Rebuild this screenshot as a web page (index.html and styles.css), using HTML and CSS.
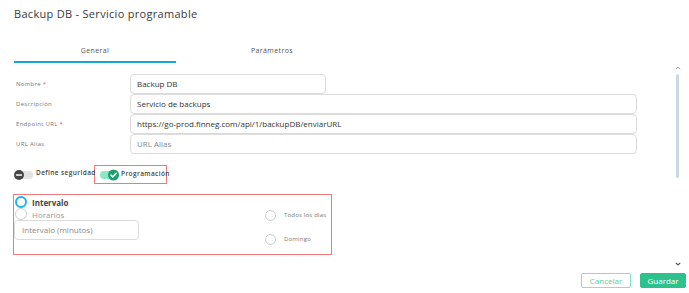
FILE: index.html
```html
<!DOCTYPE html>
<html lang="es">
<head>
<meta charset="utf-8">
<title>Backup DB - Servicio programable</title>
<link rel="stylesheet" href="styles.css">
</head>
<body>
<div class="modal">
  <h1 class="title">Backup DB - Servicio programable</h1>
  <div class="tabs">
    <div class="tab active">General</div>
    <div class="tab">Parámetros</div>
  </div>
  <div class="main">
    <div class="form">
      <div class="fields">
        <label class="lbl">Nombre <span class="req">*</span></label>
        <div class="inp short">Backup DB</div>
        <label class="lbl">Descripción</label>
        <div class="inp">Servicio de backups</div>
        <label class="lbl">Endpoint URL <span class="req">*</span></label>
        <div class="inp">https://go-prod.finneg.com/api/1/backupDB/enviarURL</div>
        <label class="lbl">URL Alias</label>
        <div class="inp ph">URL Alias</div>
      </div>
      <div class="toggles">
        <div class="toggle off">
          <span class="track"><span class="knob"><svg width="10" height="10" viewBox="0 0 10 10"><path d="M2.6 5h4.8" stroke="#fff" stroke-width="1.6" stroke-linecap="round"/></svg></span></span>
          <span class="tlabel">Define seguridad</span>
        </div>
        <div class="toggle on hl">
          <span class="track"><span class="knob"><svg width="11" height="11" viewBox="0 0 11 11"><path d="M3 5.6l1.8 1.8 3.4-3.6" fill="none" stroke="#fff" stroke-width="1.5" stroke-linecap="round" stroke-linejoin="round"/></svg></span></span>
          <span class="tlabel">Programación</span>
        </div>
      </div>
      <div class="sched">
        <div class="col-left">
          <div class="radio checked"><span class="dot"></span><span class="rlabel">Intervalo</span></div>
          <div class="radio"><span class="dot"></span><span class="rlabel">Horarios</span></div>
          <div class="inp small ph">Intervalo (minutos)</div>
        </div>
        <div class="col-right">
          <div class="radio sm"><span class="dot"></span><span class="rlabel">Todos los dias</span></div>
          <div class="radio sm"><span class="dot"></span><span class="rlabel">Domingo</span></div>
        </div>
      </div>
    </div>
    <div class="rail">
      <svg class="arrow" width="6" height="4" viewBox="0 0 6 4"><path d="M0.8 3.2L3 1 5.2 3.2" fill="none" stroke="#999" stroke-width="1"/></svg>
      <div class="thumb"></div>
      <div class="spacer"></div>
      <svg class="arrow" width="6" height="4" viewBox="0 0 6 4"><path d="M0.8 0.8L3 3 5.2 0.8" fill="none" stroke="#555" stroke-width="1.2"/></svg>
    </div>
  </div>
  <div class="footer">
    <button class="btn outline">Cancelar</button>
    <button class="btn primary">Guardar</button>
  </div>
</div>
</body>
</html>
```
FILE: styles.css
```css
* { box-sizing: border-box; }
html, body { margin: 0; padding: 0; background: #fff; }
body {
  font-family: "Open Sans", "Noto Sans", "Liberation Sans", sans-serif;
  color: #333;
  width: 689px;
  height: 293px;
  overflow: hidden;
}
.modal { display: flex; flex-direction: column; height: 293px; }
.title {
  margin: 0;
  padding: 7px 0 0 14px;
  font-size: 11px;
  line-height: 14px;
  font-weight: 400;
  letter-spacing: 0.3px;
  color: #3a3a3a;
}
.tabs { display: flex; margin: 19px 0 0 14px; }
.tab {
  padding: 4px 0 3px;
  line-height: 14px;
  font-size: 7px;
  letter-spacing: 0.4px;
  color: #555;
  text-align: center;
  border-bottom: 2px solid transparent;
}
.tab:first-child { width: 162px; }
.tab:last-child { width: 192px; }
.tab.active { border-bottom-color: #1aa6c9; }

.main { display: flex; height: 210px; }
.form { flex: 1; padding: 11px 0 0 13px; }
.fields {
  display: grid;
  grid-template-columns: 117px 507px;
  grid-auto-rows: 20px;
  align-items: center;
}
.lbl { font-size: 6px; color: #777; letter-spacing: 0.3px; padding-left: 3px; }
.req { color: #e05050; }
.inp {
  height: 20px;
  border: 1px solid #dcdcdc;
  border-radius: 4px;
  padding: 0 6px;
  font-size: 8px;
  line-height: 18px;
  color: #333;
  white-space: nowrap;
}
.inp.short { width: 196px; }
.inp.ph { color: #888; }

.toggles { display: flex; align-items: center; margin-top: 11px; height: 19px; }
.toggle { display: flex; align-items: center; flex: none; }
.toggle.off { width: 80px; margin-left: 1px; }
.toggle.hl {
  border: 1px solid #f07a7a;
  width: 73px;
  height: 19px;
  padding-left: 5px;
}
.track { position: relative; display: block; flex: none; width: 16px; height: 8px; border-radius: 4px; }
.toggle.off .track { background: #e3e3e3; margin-left: 3px; }
.toggle.on .track { background: #8ae8c6; width: 14px; }
.knob { position: absolute; top: 50%; display: flex; border-radius: 50%; transform: translateY(-50%); }
.toggle.off .knob { left: -3px; width: 10px; height: 10px; background: #454545; }
.toggle.on .knob { left: 8px; width: 11px; height: 11px; background: #1f9f6f; }
.tlabel {
  font-size: 6.5px;
  font-weight: 600;
  color: #444;
  letter-spacing: 0.4px;
  margin-left: 3px;
  white-space: nowrap;
  position: relative;
  top: -2px;
}
.toggle.on .tlabel { margin-left: 7px; top: -1px; }

.sched {
  margin-top: 10px;
  width: 319px;
  height: 61px;
  border: 1px solid #f07a7a;
  display: flex;
}
.col-left { width: 126px; padding-top: 1px; }
.col-right { margin-left: 124px; padding-top: 14px; display: flex; flex-direction: column; gap: 12px; }
.radio { display: flex; align-items: center; height: 12px; }
.dot { width: 12px; height: 12px; border-radius: 50%; border: 1px solid #cfcfcf; margin-left: 1px; flex: none; }
.radio.checked .dot { border: 2.5px solid #1bb6e6; }
.rlabel { margin-left: 5px; font-size: 8px; color: #999; }
.radio.checked .rlabel { color: #444; font-weight: 700; }
.radio.sm .dot { width: 11px; height: 11px; }
.radio.sm .rlabel { margin-left: 8px; font-size: 6px; color: #777; letter-spacing: 0.2px; }
.inp.small { width: 125px; margin-top: 0; padding-left: 7px; }

.rail {
  width: 15px;
  margin-right: 4px;
  display: flex;
  flex-direction: column;
  align-items: center;
  padding: 3px 0 7px;
}
.arrow { display: block; }
.thumb { width: 3px; height: 104px; margin-top: 4px; background: #cbd8e3; border-radius: 2px; }
.spacer { flex: 1; }

.footer { display: flex; justify-content: flex-end; gap: 9px; padding-right: 3px; }
.btn {
  height: 15px;
  padding: 0;
  font-family: inherit;
  font-size: 8px;
  border-radius: 2px;
  line-height: 13px;
}
.btn.outline { width: 50px; background: #fff; border: 1px solid #7fe6c1; color: #4fd3a3; }
.btn.primary { width: 46px; background: #2ec18d; border: 1px solid #2ec18d; color: #fff; }
```
